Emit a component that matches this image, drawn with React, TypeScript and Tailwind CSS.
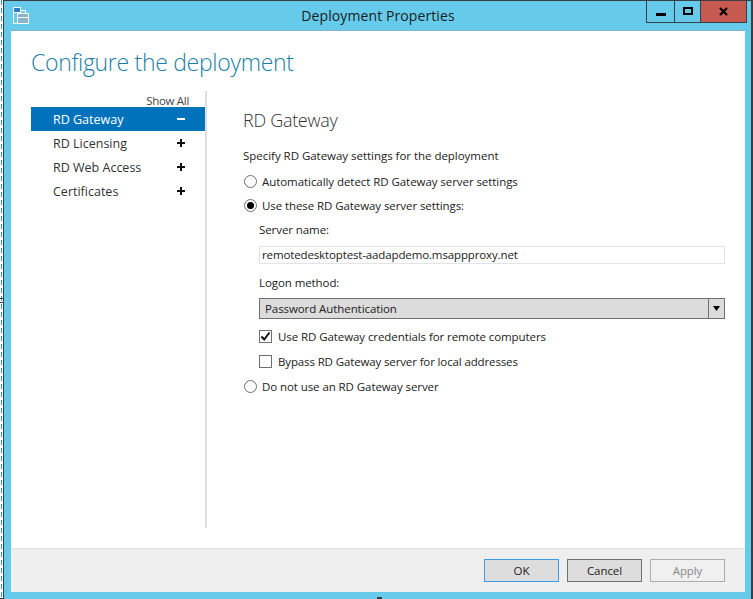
const font = { fontFamily: '"Open Sans", "Noto Sans", sans-serif' };

function Radio({ checked, label }: { checked?: boolean; label: string }) {
  return (
    <div className="flex items-center h-[19px]">
      <span className="w-[13px] h-[13px] rounded-full border border-[#6f6f6f] bg-white flex items-center justify-center mr-[5px] ml-[1px]">
        {checked && <span className="w-[7px] h-[7px] rounded-full bg-black" />}
      </span>
      <span>{label}</span>
    </div>
  );
}

function Check({ checked, label }: { checked?: boolean; label: string }) {
  return (
    <div className="flex items-center h-[19px]">
      <span className="w-[13px] h-[13px] border border-[#6f6f6f] bg-white flex items-center justify-center mr-[6px]">
        {checked && (
          <svg width="11" height="11" viewBox="0 0 11 11">
            <path d="M1.5 5.5 L4.2 8.5 L9.5 1.5" fill="none" stroke="#111" strokeWidth="2" />
          </svg>
        )}
      </span>
      <span>{label}</span>
    </div>
  );
}

function Nav({ label, active }: { label: string; active?: boolean }) {
  return (
    <div className={`h-6 flex items-center pl-[22px] pr-[20px] justify-between text-[12.5px] tracking-normal ${active ? "bg-[#0072bc] text-white" : "text-[#333]"}`}>
      <span className="pt-[3px]">{label}</span>
      <svg width="8" height="8" viewBox="0 0 8 8">
        <path d={active ? "M0 3h8v2H0z" : "M0 3h3V0h2v3h3v2H5v3H3V5H0z"} fill={active ? "#fff" : "#111"} />
      </svg>
    </div>
  );
}

function Btn({ label, cls }: { label: string; cls: string }) {
  return (
    <div className={`w-[75px] h-[23px] border flex items-center justify-center ${cls}`}>{label}</div>
  );
}

export default function App() {
  return (
    <div className="relative w-[753px] h-[599px] flex bg-white text-[11.5px] tracking-[-0.08px] text-[#222] overflow-hidden" style={font}>
      <div className="w-[3px] h-full pl-[1px]">
        <div className="w-[1px] h-full bg-[repeating-linear-gradient(to_bottom,#3f8fe0_0,#3f8fe0_5px,transparent_5px,transparent_8px)]" />
      </div>
      <div className="flex-1 h-full border-l border-t border-r-2 border-[#3a3f44] bg-[#66caeb] flex flex-col">
        <div className="h-[29px] flex relative shrink-0">
          <svg width="17" height="17" viewBox="0 0 17 17" className="mt-[6px] ml-[9px]">
            <path d="M.5.5h7v16h-7z" fill="none" stroke="#fff" />
            <path d="M1 1h6v4H1z" fill="#2f7fc4" />
            <path d="M1 5.5h6" stroke="#fff" />
            <path d="M4.5 6.5h11v10h-11z" fill="#8fb3c6" stroke="#fff" />
            <path d="M7.5 6V3.5h5V6" fill="none" stroke="#fff" />
            <path d="M5 10.5h10" stroke="#fff" />
          </svg>
          <div className="flex-1 text-center text-[14px] tracking-[0.1px] text-[#1b1b1b] leading-[30px] pr-[25px]">Deployment Properties</div>
          <div className="flex h-[21px] border-l border-b border-r border-[#3a3f44] absolute right-[4px] top-0 box-content">
            <div className="w-[28px] border-r border-[#3a3f44] flex items-center justify-center">
              <span className="w-[10px] h-[3px] bg-black mt-[5px]" />
            </div>
            <div className="w-[26px] border-r border-[#3a3f44] flex items-center justify-center">
              <span className="w-[10px] h-[8px] border-2 border-black mb-[1px]" />
            </div>
            <div className="w-[45px] bg-[#c75a50] flex items-center justify-center">
              <svg width="9" height="9" viewBox="0 0 9 9">
                <path d="M1 1l7 7M8 1L1 8" stroke="#000" strokeWidth="2.2" fill="none" />
              </svg>
            </div>
          </div>
        </div>
        <div className="flex-1 ml-[7px] mb-[7px] mr-[6px] bg-white border-t border-[#7fb3c9] flex flex-col min-h-0">
          <div className="flex-1 flex flex-col min-h-0 pl-5">
            <div className="h-[60px] shrink-0 pt-[13px] text-[23px] tracking-[-0.3px] font-light leading-[36px] text-[#1a7fa8]">Configure the deployment</div>
            <div className="flex-1 flex min-h-0 pb-5">
              <div className="w-[174px] shrink-0 pt-[3px]">
                <div className="h-[13px] leading-[13px] text-right pr-[16px] tracking-[-0.3px] text-[#444]">Show All</div>
                <Nav label="RD Gateway" active />
                <Nav label="RD Licensing" />
                <Nav label="RD Web Access" />
                <Nav label="Certificates" />
              </div>
              <div className="w-[2px] shrink-0 bg-[#e0e0e0]" />
              <div className="flex-1 pl-9 pr-5 pt-[16px]">
                <div className="text-[18px] tracking-[-0.3px] font-light leading-[26px] text-[#333]">RD Gateway</div>
                <div className="mt-[14px] h-[17px] leading-[17px] tracking-[-0.03px]">Specify RD Gateway settings for the deployment</div>
                <div className="mt-[8px] tracking-[-0.06px]"><Radio label="Automatically detect RD Gateway server settings" /></div>
                <div className="mt-[5px]"><Radio checked label="Use these RD Gateway server settings:" /></div>
                <div className="ml-4 mt-[6px]">
                  <div className="h-[17px] leading-[17px]">Server name:</div>
                  <div className="mt-[8px] h-[18px] border border-[#e3e3ec] pl-[2px] leading-[16px] tracking-[-0.13px]">remotedesktoptest-aadapdemo.msappproxy.net</div>
                  <div className="mt-[10px] h-[17px] leading-[17px]">Logon method:</div>
                  <div className="mt-[7px] h-[21px] border border-[#707070] bg-[#dcdcdc] flex items-center">
                    <span className="flex-1 pl-[5px]">Password Authentication</span>
                    <span className="w-[16px] h-full border-l border-[#707070] flex items-center justify-center">
                      <svg width="7" height="5" viewBox="0 0 7 5"><path d="M0 0h7L3.5 5z" fill="#000" /></svg>
                    </span>
                  </div>
                  <div className="mt-[8px]"><Check checked label="Use RD Gateway credentials for remote computers" /></div>
                  <div className="mt-[6px] tracking-[-0.13px]"><Check label="Bypass RD Gateway server for local addresses" /></div>
                </div>
                <div className="mt-[6px]"><Radio label="Do not use an RD Gateway server" /></div>
              </div>
            </div>
          </div>
          <div className="h-[44px] shrink-0 bg-[#efefef] border-t border-[#dfdfdf] flex items-start justify-end gap-2 pt-[10px] pr-[20px]">
            <Btn label="OK" cls="bg-[#dddddd] border-[#3c9cec]" />
            <Btn label="Cancel" cls="bg-[#dddddd] border-[#707070]" />
            <Btn label="Apply" cls="bg-[#f0f0f0] border-[#adadad] text-[#8a8a8a]" />
          </div>
        </div>
      </div>
      {/* window resize handles that sit over the frame */}
      <div className="absolute left-0 top-[298px] w-[4px] h-[5px] border-y border-[#3a3f44]" />
      <div className="absolute left-[377px] top-[597px] w-[5px] h-[2px] bg-[#3a3f44]" />
      <div className="absolute left-0 top-[598px] w-[4px] h-[1px] bg-[#3a3f44]" />
    </div>
  );
}
